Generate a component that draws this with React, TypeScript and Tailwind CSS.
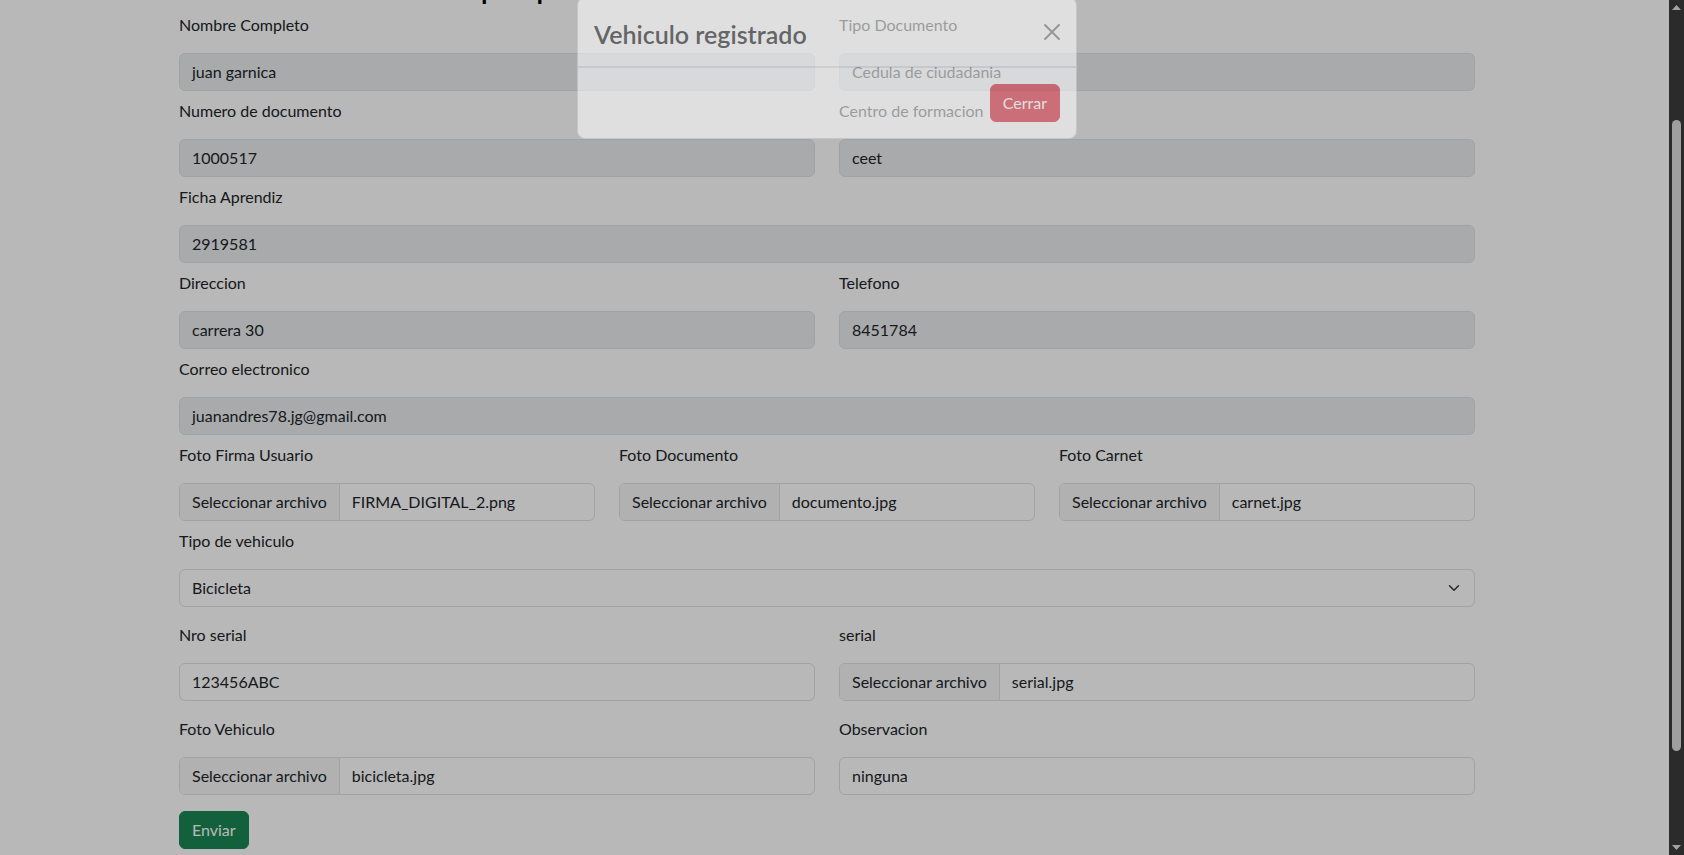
import React from "react";

const labelCls = "block h-6 leading-6 mb-4 text-[16px] text-[#212529] whitespace-nowrap";
const boxBase =
  "h-[38px] w-full rounded-[6px] border border-[#dee2e6] px-3 flex items-center text-[16px] text-[#212529] whitespace-nowrap overflow-hidden";

function Field({ label, value, disabled }: { label: string; value: string; disabled?: boolean }) {
  return (
    <div>
      <label className={labelCls}>{label}</label>
      <div className={boxBase + (disabled ? " bg-[#e9ecef]" : " bg-white")}>{value}</div>
    </div>
  );
}

function FileField({ label, file }: { label: string; file: string }) {
  return (
    <div>
      <label className={labelCls}>{label}</label>
      <div className="h-[38px] w-full rounded-[6px] border border-[#dee2e6] bg-white flex items-stretch text-[16px] text-[#212529] overflow-hidden whitespace-nowrap">
        <span className="flex items-center px-3 bg-[#f5f6f7] border-r border-[#dee2e6]">Seleccionar archivo</span>
        <span className="flex items-center pl-3">{file}</span>
      </div>
    </div>
  );
}

export default function App() {
  return (
    <div className="flex h-[855px] w-full overflow-hidden bg-white font-['Lato',sans-serif] text-[#212529]">
      {/* page area */}
      <div className="relative flex-1 overflow-hidden bg-white">
        <div className="pr-[15px]">
          <div className="mx-auto w-[1320px] px-3 -mt-[33px]">
            <h2 className="mb-2 h-[38px] pl-[98px] text-[32px] leading-[38px] font-medium text-black whitespace-nowrap">
              Formulario de parqueadero
            </h2>

            <div className="mb-2 grid grid-cols-2 gap-x-6">
              <Field label="Nombre Completo" value="juan garnica" disabled />
              <Field label="Tipo Documento" value="Cedula de ciudadania" disabled />
            </div>
            <div className="mb-2 grid grid-cols-2 gap-x-6">
              <Field label="Numero de documento" value="1000517" disabled />
              <Field label="Centro de formacion" value="ceet" disabled />
            </div>
            <div className="mb-2">
              <Field label="Ficha Aprendiz" value="2919581" disabled />
            </div>
            <div className="mb-2 grid grid-cols-2 gap-x-6">
              <Field label="Direccion" value="carrera 30" disabled />
              <Field label="Telefono" value="8451784" disabled />
            </div>
            <div className="mb-2">
              <Field label="Correo electronico" value="juanandres78.jg@gmail.com" disabled />
            </div>
            <div className="mb-2 grid grid-cols-3 gap-x-6">
              <FileField label="Foto Firma Usuario" file="FIRMA_DIGITAL_2.png" />
              <FileField label="Foto Documento" file="documento.jpg" />
              <FileField label="Foto Carnet" file="carnet.jpg" />
            </div>
            <div className="mb-4">
              <label className={labelCls}>Tipo de vehiculo</label>
              <div className={boxBase + " bg-white justify-between"}>
                <span>Bicicleta</span>
                <svg width="16" height="12" viewBox="0 0 16 16" fill="none">
                  <path d="m2 5 6 6 6-6" stroke="#343a40" strokeWidth="2" strokeLinecap="round" strokeLinejoin="round" />
                </svg>
              </div>
            </div>
            <div className="mb-4 grid grid-cols-2 gap-x-6">
              <Field label="Nro serial" value="123456ABC" />
              <FileField label="serial" file="serial.jpg" />
            </div>
            <div className="mb-4 grid grid-cols-2 gap-x-6">
              <FileField label="Foto Vehiculo" file="bicicleta.jpg" />
              <Field label="Observacion" value="ninguna" />
            </div>
            <button className="h-[38px] rounded-[6px] border border-[#198754] bg-[#198754] px-3 text-[16px] text-white">
              Enviar
            </button>
          </div>
        </div>

        {/* backdrop */}
        <div className="absolute inset-0 bg-black opacity-[0.28]" />

        {/* modal (fading in) */}
        <div className="absolute inset-x-0 top-0 flex justify-center pr-[15px]">
          <div className="-mt-[3px] w-[500px] rounded-[8px] border border-black/[0.175] bg-white opacity-[0.56]">
            <div className="flex items-center justify-between border-b border-[#dee2e6] p-4">
              <h1 className="pt-1 text-[25px] leading-8 font-semibold text-[#212529] whitespace-nowrap">Vehiculo registrado</h1>
              <button className="-m-2 box-content h-4 w-4 p-2 opacity-50">
                <svg width="16" height="16" viewBox="0 0 16 16" fill="#000">
                  <path d="M.293.293a1 1 0 0 1 1.414 0L8 6.586 14.293.293a1 1 0 1 1 1.414 1.414L9.414 8l6.293 6.293a1 1 0 0 1-1.414 1.414L8 9.414l-6.293 6.293a1 1 0 0 1-1.414-1.414L6.586 8 .293 1.707a1 1 0 0 1 0-1.414z" />
                </svg>
              </button>
            </div>
            <div className="flex items-center justify-end border-t border-[#dee2e6] p-3">
              <button className="m-1 h-[38px] rounded-[6px] border border-[#dc3545] bg-[#dc3545] px-3 text-[16px] text-white">
                Cerrar
              </button>
            </div>
          </div>
        </div>
      </div>

      {/* scrollbar */}
      <div className="flex w-[15px] flex-col items-center bg-[#2b2b2b]">
        <div className="flex h-[15px] items-center justify-center">
          <svg width="9" height="5" viewBox="0 0 9 5">
            <path d="M0 5 L4.5 0 L9 5 Z" fill="#a3a3a3" />
          </svg>
        </div>
        <div className="mt-[105px] h-[631px] w-[9px] rounded-full bg-[#9f9f9f]" />
        <div className="flex-1" />
        <div className="flex h-[15px] items-center justify-center">
          <svg width="9" height="5" viewBox="0 0 9 5">
            <path d="M0 0 L9 0 L4.5 5 Z" fill="#a3a3a3" />
          </svg>
        </div>
      </div>
    </div>
  );
}
